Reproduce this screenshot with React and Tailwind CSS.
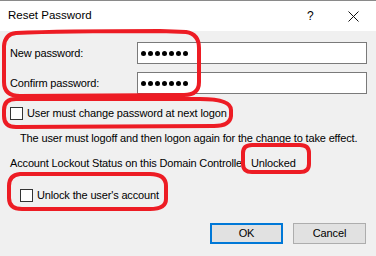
import React from "react";

const RED = "#ed1c24";

function Dots() {
  return (
    <div className="flex items-center gap-[2px]">
      {[0, 1, 2, 3, 4, 5, 6].map((i) => (
        <span key={i} className="w-[5px] h-[5px] rounded-full bg-black" />
      ))}
    </div>
  );
}

function PasswordRow({ label }) {
  return (
    <div className="flex items-center h-[22px]">
      <div className="w-[137px] pl-[10px]">{label}</div>
      <div className="w-[230px] h-[22px] border border-[#7a7a7a] bg-white flex items-center pl-[3px]">
        <Dots />
      </div>
    </div>
  );
}

function Checkbox() {
  return <span className="w-[13px] h-[13px] border border-[#333] bg-white shrink-0" />;
}

function Marks() {
  // hand-drawn red circles over the dialog
  return (
    <svg className="absolute inset-0 pointer-events-none" width="376" height="256" viewBox="0 0 376 256">
      <g fill="none" stroke={RED} strokeWidth="4" strokeLinecap="round" strokeLinejoin="round">
        <path d="M16 33 Q60 31 160 31 L186 32 Q199 34 199 48 L199 82 Q199 95 184 95 L20 96 Q4 96 4 82 L4 46 Q5 34 16 33 Z" />
        <path d="M16 99 L200 99 Q231 99 231 110 L231 116 Q230 126 214 126 L16 127 Q4 127 4 116 L4 110 Q4 99 16 99 Z" />
        <path d="M252 145 L300 145 Q309 145 309 153 L309 164 Q309 172 300 172 L252 172 Q243 172 243 164 L243 153 Q243 145 252 145 Z" />
        <path d="M20 174 L150 174 Q166 174 166 186 L166 199 Q166 209 150 209 L22 209 Q9 209 9 198 L9 186 Q9 175 20 174 Z" />
      </g>
    </svg>
  );
}

export default function App() {
  return (
    <div className="relative w-[376px] h-[256px] overflow-hidden bg-[#f0f0f0] text-black text-[11px] tracking-[-0.15px] font-['Liberation_Sans',Arial,sans-serif]">
      {/* title bar */}
      <div className="h-[31px] bg-white border-t border-[#8a8a8a] flex items-center tracking-normal">
        <div className="pl-[8px] text-[11.5px] flex-1">Reset Password</div>
        <div className="w-[10px] text-[12px] mr-[31px]">?</div>
        <svg width="11" height="11" viewBox="0 0 11 11" className="mr-[17px]">
          <path d="M0.5 0.5 L10.5 10.5 M10.5 0.5 L0.5 10.5" stroke="#111" strokeWidth="1" />
        </svg>
      </div>

      <div className="pt-[11px] flex flex-col">
        <PasswordRow label="New password:" />
        <div className="h-[8px]" />
        <PasswordRow label="Confirm password:" />

        <div className="flex items-center gap-[4px] pl-[10px] mt-[13px] h-[13px]">
          <Checkbox />
          <span>User must change password at next logon</span>
        </div>

        <div className="pl-[20px] mt-[11px] leading-[14px]">
          The user must logoff and then logon again for the change to take effect.
        </div>

        <div className="flex items-center mt-[11px] leading-[14px]">
          <div className="w-[241px] pl-[10px] overflow-hidden whitespace-nowrap">
            Account Lockout Status on this Domain Controller:
          </div>
          <div className="pl-[10px]">Unlocked</div>
        </div>

        <div className="flex items-center gap-[4px] pl-[20px] mt-[19px] h-[13px]">
          <Checkbox />
          <span>Unlock the user's account</span>
        </div>

        <div className="flex justify-end gap-[10px] pr-[10px] mt-[21px]">
          <button className="w-[73px] h-[21px] border-2 border-[#0078d7] bg-[#e1e1e1] text-[11px]">OK</button>
          <button className="w-[73px] h-[21px] border border-[#adadad] bg-[#e1e1e1] text-[11px]">Cancel</button>
        </div>
      </div>

      <Marks />
    </div>
  );
}
